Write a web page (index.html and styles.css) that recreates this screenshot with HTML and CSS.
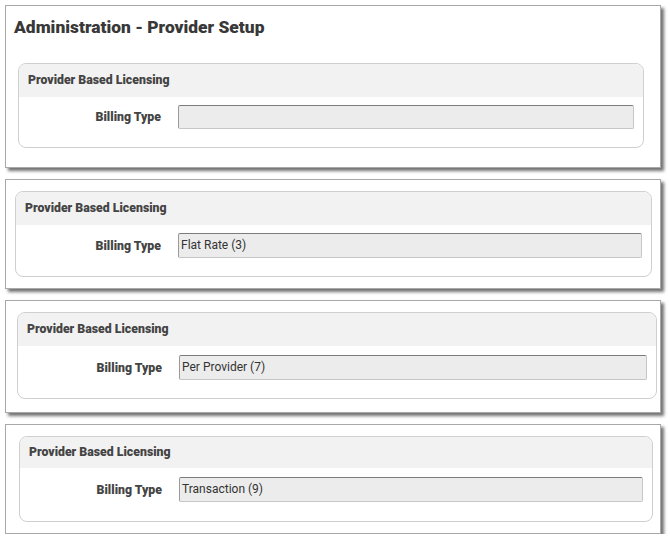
FILE: index.html
```html
<!DOCTYPE html>
<html>
<head>
<meta charset="utf-8">
<link rel="stylesheet" href="styles.css">
</head>
<body>
<div class="page">
  <section class="shot shot-1">
    <h1 class="title">Administration - Provider Setup</h1>
    <div class="fieldset">
      <div class="legend">Provider Based Licensing</div>
      <div class="row">
        <span class="label">Billing Type</span>
        <div class="input"></div>
      </div>
    </div>
  </section>

  <section class="shot shot-2">
    <div class="fieldset">
      <div class="legend">Provider Based Licensing</div>
      <div class="row">
        <span class="label">Billing Type</span>
        <div class="input">Flat Rate (3)</div>
      </div>
    </div>
  </section>

  <section class="shot shot-3">
    <div class="fieldset">
      <div class="legend">Provider Based Licensing</div>
      <div class="row">
        <span class="label">Billing Type</span>
        <div class="input">Per Provider (7)</div>
      </div>
    </div>
  </section>

  <section class="shot shot-4">
    <div class="fieldset">
      <div class="legend">Provider Based Licensing</div>
      <div class="row">
        <span class="label">Billing Type</span>
        <div class="input">Transaction (9)</div>
      </div>
    </div>
  </section>
</div>
</body>
</html>
```

FILE: styles.css
```css
html, body {
  margin: 0;
  padding: 0;
  background: #ffffff;
}

body {
  font-family: Roboto, "Liberation Sans", Arial, sans-serif;
  color: #333;
}

.page {
  padding: 5px 0 0 5px;
  display: flex;
  flex-direction: column;
  gap: 11px;
  width: 656px;
}

.shot {
  background: #fff;
  border: 1px solid #a8a8a8;
  box-shadow: 3px 3px 3px rgba(0, 0, 0, 0.55);
}

.shot-1 { padding: 11px 16px 19px 12px; }
.shot-2 { padding: 11px 8px 11px 9px; }
.shot-3 { padding: 11px 3px 13px 11px; }
.shot-4 { padding: 11px 7px 11px 13px; }

.title {
  margin: 0 0 26px -4px;
  font-size: 17.4px;
  line-height: 20px;
  font-weight: 900;
  color: #383838;
}

.fieldset {
  border: 1px solid #cfcfcf;
  border-radius: 8px;
  overflow: hidden;
}

.legend {
  background: #f2f2f2;
  height: 33px;
  line-height: 32px;
  padding-left: 9px;
  font-size: 12.3px;
  font-weight: 900;
  color: #444;
}

.shot-4 .legend {
  height: 31px;
  line-height: 30px;
}

.row {
  display: grid;
  grid-template-columns: 142px 1fr;
  column-gap: 17px;
  align-items: center;
  padding: 8px 9px 18px 0;
}

.shot-2 .row { grid-template-columns: 145px 1fr; }
.shot-3 .row { grid-template-columns: 144px 1fr; padding-top: 9px; }
.shot-4 .row { grid-template-columns: 142px 1fr; padding-top: 9px; padding-bottom: 19px; }

.label {
  text-align: right;
  font-size: 12.3px;
  font-weight: 900;
  color: #444;
}

.input {
  box-sizing: border-box;
  height: 24px;
  line-height: 22px;
  padding-left: 2px;
  background: #ececec;
  border: 1px solid #c6c6c6;
  border-top-color: #7c7c7c;
  border-left-color: #9a9a9a;
  border-radius: 2px;
  font-size: 12px;
  color: #333;
}

.shot-2 .input,
.shot-3 .input,
.shot-4 .input {
  height: 25px;
  line-height: 23px;
}
```
